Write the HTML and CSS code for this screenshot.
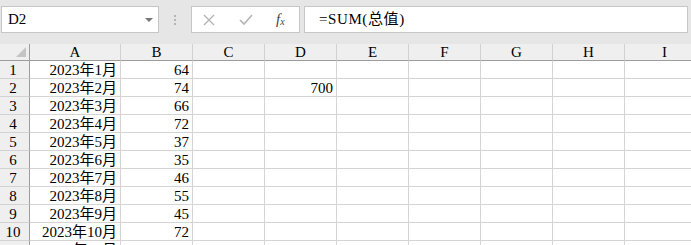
FILE: index.html
```html
<!DOCTYPE html>
<html lang="zh">
<head>
    <meta charset="UTF-8">
    <title>Sheet</title>
    <link rel="stylesheet" href="styles.css">
</head>
<body>
    <div class="toolbar">
        <div class="name-box">
            <span>D2</span>
            <span class="drop"></span>
        </div>
        <div class="grip">
            <i></i><i></i><i></i>
        </div>
        <div class="fx-buttons">
            <svg width="14" height="14" viewBox="0 0 14 14"><path d="M2 2 L12 12 M12 2 L2 12" stroke="#b4b4b4" stroke-width="1.4" fill="none"/></svg>
            <svg width="16" height="14" viewBox="0 0 16 14"><path d="M2 7 L6 11 L14 2" stroke="#b4b4b4" stroke-width="1.6" fill="none"/></svg>
            <span class="fx">f<sub>x</sub></span>
        </div>
        <div class="formula">=SUM(总值)</div>
    </div>

    <div class="sheet">
        <div class="corner"><span class="tri"></span></div>
        <div class="colhead">A</div>
        <div class="colhead">B</div>
        <div class="colhead">C</div>
        <div class="colhead">D</div>
        <div class="colhead">E</div>
        <div class="colhead">F</div>
        <div class="colhead">G</div>
        <div class="colhead">H</div>
        <div class="colhead">I</div>
    </div>
    <div class="sheet" id="rows"></div>

    <script>
        const months = [64, 74, 66, 72, 37, 35, 46, 55, 45, 72, 60];
        const rows = document.getElementById('rows');
        months.forEach((val, i) => {
            let html = '<div class="rowhead">' + (i + 1) + '</div>';
            html += '<div class="cell right">2023年' + (i + 1) + '月</div>';
            html += '<div class="cell right">' + val + '</div>';
            for (let c = 0; c < 7; c++) {
                let txt = (i === 1 && c === 1) ? '700' : '';
                html += '<div class="cell right">' + txt + '</div>';
            }
            rows.insertAdjacentHTML('beforeend', html);
        });
    </script>
</body>
</html>
```

FILE: styles.css
```css
body {
    margin: 0;
    width: 691px;
    height: 245px;
    overflow: hidden;
    background: #fff;
    font-family: "Liberation Serif", "Noto Sans CJK SC", serif;
    font-size: 15px;
    color: #000;
}
.toolbar {
    display: flex;
    align-items: center;
    height: 44px;
    padding: 6px 0 11px 1px;
    box-sizing: border-box;
    background: #e6e6e6;
}
.name-box {
    display: flex;
    align-items: center;
    justify-content: space-between;
    width: 158px;
    height: 27px;
    box-sizing: border-box;
    padding: 0 4px 0 6px;
    background: #fff;
    border: 1px solid #c6c6c6;
}
.drop {
    width: 0;
    height: 0;
    border-left: 4px solid transparent;
    border-right: 4px solid transparent;
    border-top: 4px solid #777;
    margin-right: 1px;
}
.grip {
    display: flex;
    flex-direction: column;
    gap: 2px;
    width: 32px;
    align-items: center;
}
.grip i {
    width: 2px;
    height: 2px;
    background: #b4b4b4;
}
.fx-buttons {
    display: flex;
    align-items: center;
    gap: 22px;
    width: 109px;
    height: 27px;
    box-sizing: border-box;
    padding: 0 0 0 10px;
    background: #fff;
    border: 1px solid #c6c6c6;
}
.fx {
    font-style: italic;
    font-size: 15px;
    color: #444;
}
.fx sub {
    font-size: 10px;
    vertical-align: -1px;
}
.formula {
    flex: 1;
    height: 27px;
    line-height: 25px;
    box-sizing: border-box;
    margin: 0 3px 0 4px;
    padding-left: 14px;
    background: #fff;
    border: 1px solid #c6c6c6;
    letter-spacing: 0.6px;
}
.sheet {
    display: grid;
    grid-template-columns: 30px 91px repeat(7, 72px) 80px;
}
.corner, .colhead {
    height: 17px;
    box-sizing: border-box;
    background: #efefef;
    border-bottom: 1px solid #9c9c9c;
    border-right: 1px solid #d2d2d2;
    text-align: center;
    line-height: 17px;
}
.corner {
    position: relative;
    border-right-color: #9c9c9c;
}
.tri {
    position: absolute;
    right: 3px;
    bottom: 3px;
    width: 0;
    height: 0;
    border-left: 10px solid transparent;
    border-bottom: 10px solid #c4c4c4;
}
.rowhead {
    height: 18px;
    box-sizing: border-box;
    background: #efefef;
    border-right: 1px solid #9c9c9c;
    border-bottom: 1px solid #d2d2d2;
    padding-right: 3px;
    text-align: center;
    line-height: 19px;
}
.cell {
    height: 18px;
    box-sizing: border-box;
    border-right: 1px solid #d4d4d4;
    border-bottom: 1px solid #d4d4d4;
    padding: 0 3px;
    line-height: 19px;
    white-space: nowrap;
}
.right {
    text-align: right;
}
```
